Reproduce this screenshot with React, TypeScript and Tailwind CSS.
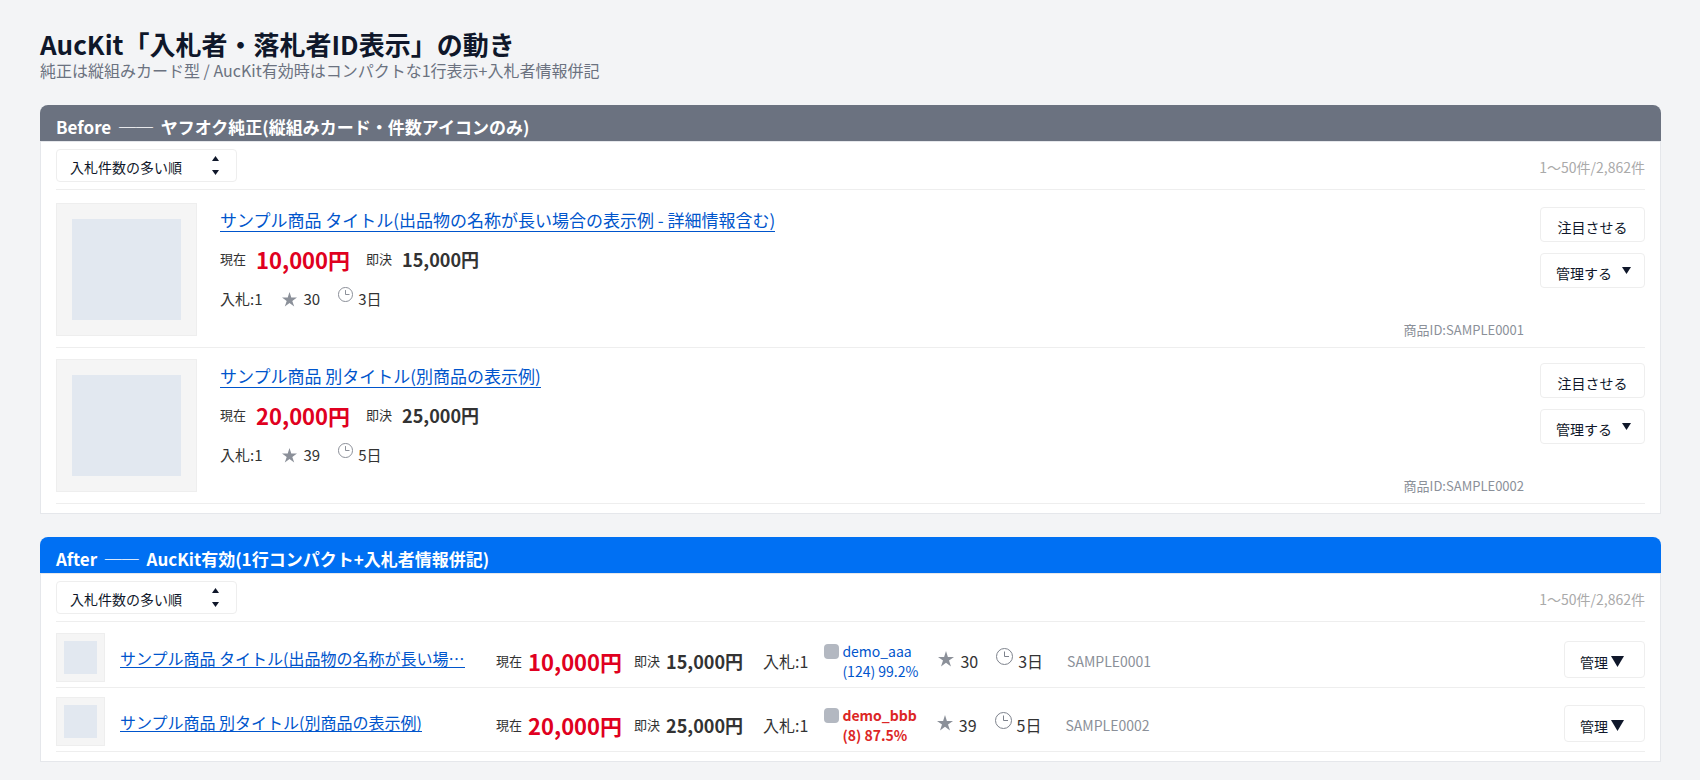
import React from "react";
import clsx from "clsx";

type Item = {
  id: string;
  title: string;
  shortTitle: string;
  price: string;
  buyNow: string;
  bids: number;
  watch: number;
  remain: string;
  bidder: { name: string; rating: string; warn: boolean };
};

const items: Item[] = [
  {
    id: "SAMPLE0001",
    title: "サンプル商品 タイトル(出品物の名称が長い場合の表示例 - 詳細情報含む)",
    shortTitle: "サンプル商品 タイトル(出品物の名称が長い場…",
    price: "10,000円",
    buyNow: "15,000円",
    bids: 1,
    watch: 30,
    remain: "3日",
    bidder: { name: "demo_aaa", rating: "(124) 99.2%", warn: false },
  },
  {
    id: "SAMPLE0002",
    title: "サンプル商品 別タイトル(別商品の表示例)",
    shortTitle: "サンプル商品 別タイトル(別商品の表示例)",
    price: "20,000円",
    buyNow: "25,000円",
    bids: 1,
    watch: 39,
    remain: "5日",
    bidder: { name: "demo_bbb", rating: "(8) 87.5%", warn: true },
  },
];

function StarIcon({ className }: { className?: string }) {
  return (
    <svg viewBox="0 0 16 16" className={clsx("shrink-0", className)} aria-hidden="true">
      <path
        d="M8 0 L9.9 5.9 L16 5.9 L11 9.5 L13 15.5 L8 11.8 L3 15.5 L5 9.5 L0 5.9 L6.1 5.9 Z"
        fill="#8b9099"
      />
    </svg>
  );
}

function ClockIcon({ className }: { className?: string }) {
  return (
    <svg
      viewBox="0 0 17 17"
      className={clsx("shrink-0 self-start", className)}
      fill="none"
      stroke="#7d828c"
      aria-hidden="true"
    >
      <circle cx="8.5" cy="8.5" r="8" />
      <path d="M8.5 3.5 V8.5 H13" />
    </svg>
  );
}

function DownIcon({ className }: { className?: string }) {
  return (
    <svg
      viewBox="0 0 12 10"
      preserveAspectRatio="none"
      className={clsx("shrink-0", className)}
      fill="#0f172a"
      aria-hidden="true"
    >
      <path d="M0 0 H12 L6 10 Z" />
    </svg>
  );
}

function Thumb({ small }: { small?: boolean }) {
  return (
    <div
      className={clsx(
        "shrink-0 border border-[#eeeeee] bg-[#f5f5f5]",
        small ? "h-[49px] w-[49px] p-[7px]" : "h-[133px] w-[141px] p-[15px]"
      )}
    >
      <div className="h-full bg-[#e2e8f0]" />
    </div>
  );
}

function Toolbar({ id }: { id: string }) {
  return (
    <div className="flex items-center justify-between border-b border-[#eeeeee] py-[7px]">
      <div className="relative">
        <select
          id={id}
          aria-label="並び順"
          className="block h-[33px] w-[181px] appearance-none rounded border border-[#eeeeee] bg-white pt-[2px] pl-[13px] text-sm text-[#0f172a]"
        >
          <option>入札件数の多い順</option>
        </select>
        <svg
          viewBox="0 0 7 19"
          className="pointer-events-none absolute top-[7px] right-[18px] h-[19px] w-[7px]"
          fill="#0f172a"
          aria-hidden="true"
        >
          <path d="M0 5 L3.5 0 L7 5 Z" />
          <path d="M0 14 L3.5 19 L7 14 Z" />
        </svg>
      </div>
      <p className="pt-[2px] text-sm text-[#aaaaaa]">1〜50件/2,862件</p>
    </div>
  );
}

type PanelProps = {
  id: string;
  label: string;
  title: string;
  color: string;
  children: React.ReactNode;
};

function Panel({ id, label, title, color, children }: PanelProps) {
  return (
    <section>
      <h2
        className={clsx(
          "flex h-9 items-center rounded-t-lg px-4 pt-2 text-[17px] font-bold whitespace-pre text-white",
          color
        )}
      >
        {`${label}  ──  ${title}`}
      </h2>
      <div className="border border-[#e5e7eb] bg-white px-[15px] pb-[9px]">
        <Toolbar id={id} />
        <ul className="pt-[2px]">{children}</ul>
      </div>
    </section>
  );
}

function CardRow({ item }: { item: Item }) {
  return (
    <li className="flex border-b border-[#eeeeee] py-[11px]">
      <Thumb />
      <div className="ml-[23px] flex-1 pt-[6px]">
        <a
          href="#"
          className="inline-block border-b border-[#0055cc] align-top text-[17px] leading-[22px] text-[#0055cc]"
        >
          {item.title}
        </a>
        <div className="mt-[10px] flex h-8 items-center text-[#333333]">
          <span className="text-[13px]">現在</span>
          <span className="ml-[10px] text-[22px] font-bold text-[#e00020]">{item.price}</span>
          <span className="ml-4 text-[13px]">即決</span>
          <span className="ml-[10px] text-lg font-bold">{item.buyNow}</span>
        </div>
        <div className="mt-3 flex h-6 items-center text-[15px] text-[#333333]">
          <span>入札:{item.bids}</span>
          <StarIcon className="ml-[19px] size-[15px]" />
          <span className="ml-[7px]">{item.watch}</span>
          <ClockIcon className="ml-[18px] size-[15px]" />
          <span className="ml-[5px]">{item.remain}</span>
        </div>
      </div>
      <p className="mr-4 self-end text-[13px] leading-none text-[#8b9099]">商品ID:{item.id}</p>
      <div className="flex flex-col gap-[11px] pt-1 text-sm text-[#0f172a]">
        <button className="flex h-[35px] w-[105px] items-center justify-center rounded border border-[#eeeeee]">
          <span className="pt-[5px]">注目させる</span>
        </button>
        <button className="flex h-[35px] w-[105px] items-center rounded border border-[#eeeeee] pl-[15px]">
          <span className="pt-[5px]">管理する</span>
          <DownIcon className="ml-[10px] h-[7px] w-[9px]" />
        </button>
      </div>
    </li>
  );
}

function CompactRow({ item }: { item: Item }) {
  const { bidder } = item;
  return (
    <li className="mt-[9px] flex items-center border-b border-[#eeeeee] pb-[5px]">
      <Thumb small />
      <div className="ml-[15px] w-[360px] pt-[7px]">
        <a
          href="#"
          className="inline-block border-b border-[#0055cc] align-top text-base leading-[18px] text-[#0055cc]"
        >
          {item.shortTitle}
        </a>
      </div>
      <div className="ml-4 flex h-[49px] flex-1 items-center pt-[7px] text-base text-[#333333]">
        <span className="text-[13px]">現在</span>
        <span className="ml-[6px] text-[22px] font-bold text-[#e00020]">{item.price}</span>
        <span className="ml-3 text-[13px]">即決</span>
        <span className="ml-[6px] text-lg font-bold">{item.buyNow}</span>
        <span className="ml-5">入札:{item.bids}</span>
        <div
          className={clsx(
            "ml-4 flex text-sm leading-5",
            bidder.warn ? "font-bold text-[#dc2626]" : "text-[#0055cc]"
          )}
        >
          <span className="mt-[3px] mr-[3px] size-[15px] shrink-0 rounded bg-[#b3b8c1]" />
          <div>
            <p>{bidder.name}</p>
            <p>{bidder.rating}</p>
          </div>
        </div>
        <div className="ml-5 flex h-[26px] items-center">
          <StarIcon className="mb-[5px] size-4" />
          <span className="ml-[6px]">{item.watch}</span>
          <ClockIcon className="ml-[18px] size-[17px]" />
          <span className="ml-[5px]">{item.remain}</span>
        </div>
        <span className="ml-6 text-sm text-[#8b9099]">{item.id}</span>
      </div>
      <button className="mt-1 flex h-[37px] w-[81px] items-center rounded border border-[#eeeeee] pt-1 pl-[15px] text-sm text-[#0f172a]">
        <span>管理</span>
        <DownIcon className="ml-[3px] h-[11px] w-[13px]" />
      </button>
    </li>
  );
}

export default function App() {
  return (
    <main
      lang="ja"
      className="min-h-screen bg-[#f3f4f6] pt-7 pr-[39px] pb-[18px] pl-10 font-['Noto_Sans_CJK_JP',sans-serif]"
    >
      <h1 className="text-[26px] leading-8 font-bold text-[#0f172a]">
        AucKit「入札者・落札者ID表示」の動き
      </h1>
      <p className="text-base leading-5 text-[#6b7280]">
        純正は縦組みカード型 / AucKit有効時はコンパクトな1行表示+入札者情報併記
      </p>
      <div className="mt-[25px] flex flex-col gap-[23px]">
        <Panel
          id="sort-before"
          label="Before"
          title="ヤフオク純正(縦組みカード・件数アイコンのみ)"
          color="bg-[#6b7280]"
        >
          {items.map((item) => (
            <CardRow key={item.id} item={item} />
          ))}
        </Panel>
        <Panel
          id="sort-after"
          label="After"
          title="AucKit有効(1行コンパクト+入札者情報併記)"
          color="bg-[#0070f3]"
        >
          {items.map((item) => (
            <CompactRow key={item.id} item={item} />
          ))}
        </Panel>
      </div>
    </main>
  );
}
